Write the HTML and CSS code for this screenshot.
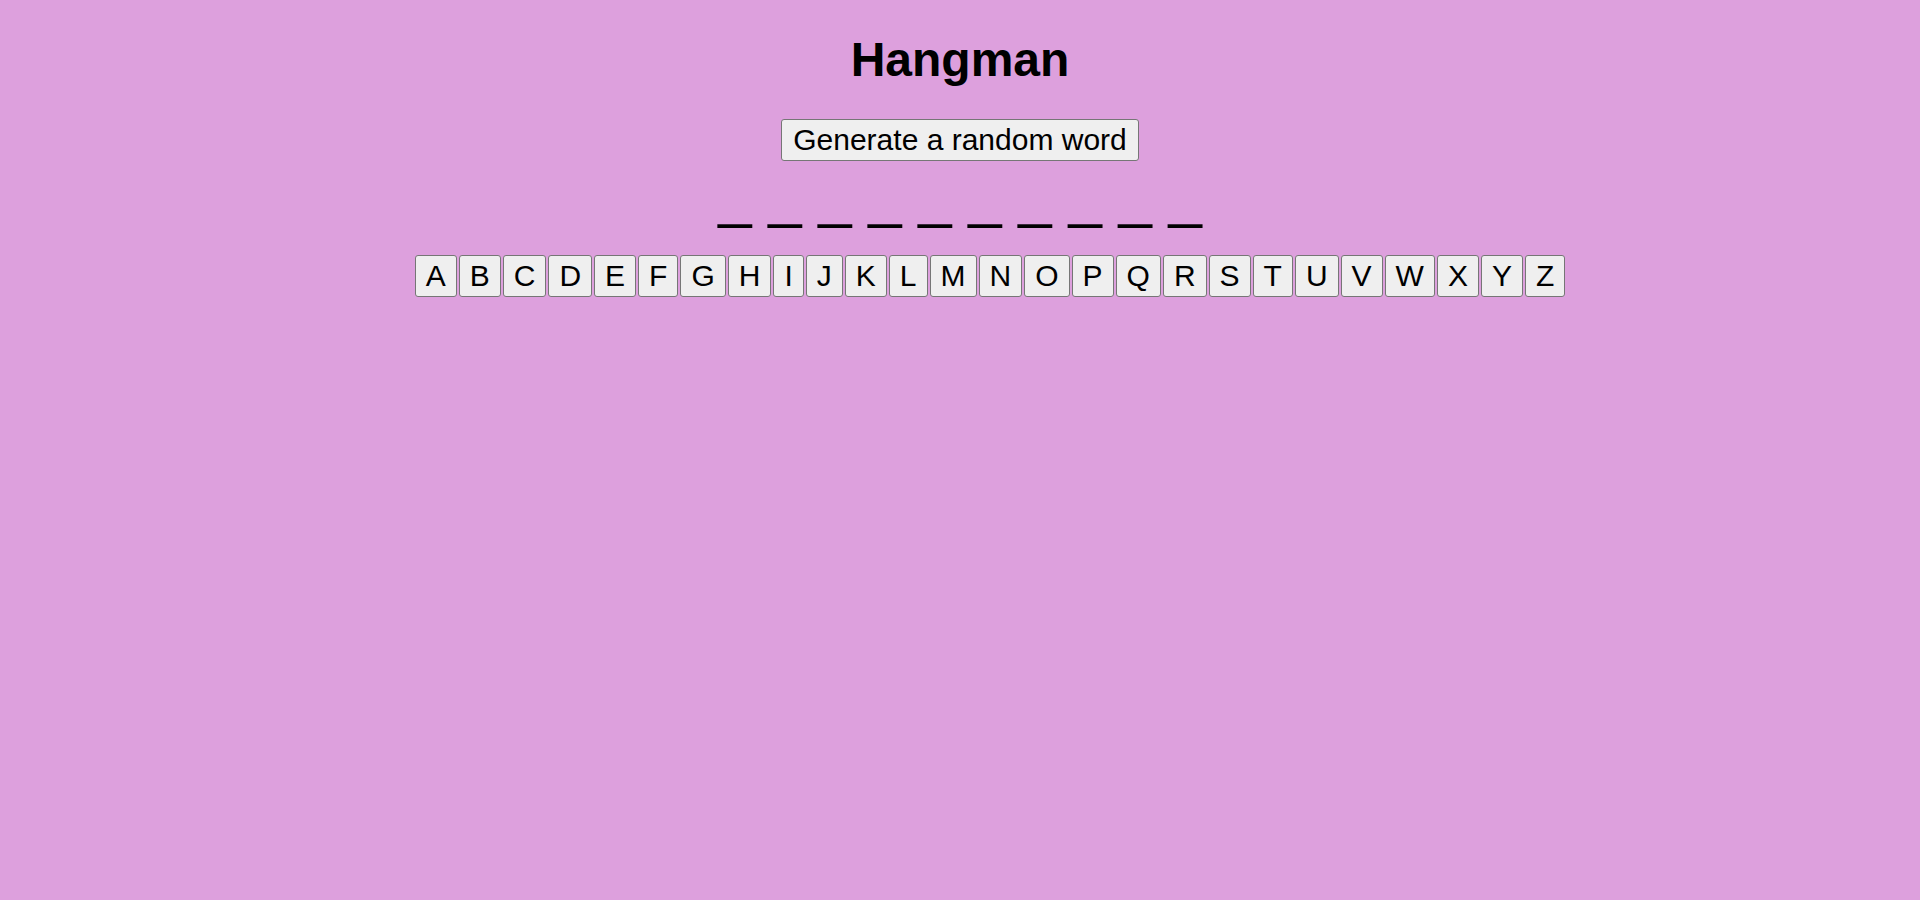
FILE: index.html
```html
<!DOCTYPE html>
<html lang="en">
<head>
<meta charset="utf-8">
<title>Hangman</title>
<link rel="stylesheet" href="styles.css">
</head>
<body>
<main class="game">
  <h1 class="title">Hangman</h1>
  <button class="btn generate">Generate a random word</button>
  <div class="word">_ _ _ _ _ _ _ _ _ _</div>
  <div class="keyboard">
    <button class="btn key">A</button><button class="btn key">B</button><button class="btn key">C</button><button class="btn key">D</button><button class="btn key">E</button><button class="btn key">F</button><button class="btn key">G</button><button class="btn key">H</button><button class="btn key">I</button><button class="btn key">J</button><button class="btn key">K</button><button class="btn key">L</button><button class="btn key">M</button><button class="btn key">N</button><button class="btn key">O</button><button class="btn key">P</button><button class="btn key">Q</button><button class="btn key">R</button><button class="btn key">S</button><button class="btn key">T</button><button class="btn key">U</button><button class="btn key">V</button><button class="btn key">W</button><button class="btn key">X</button><button class="btn key">Y</button><button class="btn key">Z</button>
  </div>
</main>
</body>
</html>
```
FILE: styles.css
```css
html, body {
  margin: 0;
  padding: 0;
  background: #dda0dd;
  height: 100%;
}

body {
  font-family: "Liberation Sans", Arial, sans-serif;
  color: #000;
}

.game {
  display: flex;
  flex-direction: column;
  align-items: center;
}

.title {
  margin: 32px 0 0;
  font-size: 48px;
  line-height: 56px;
  font-weight: bold;
}

.btn {
  font-family: "Liberation Sans", Arial, sans-serif;
  font-size: 30px;
  line-height: 34px;
  color: #000;
  background: #efefef;
  border: 1px solid #767676;
  border-radius: 3px;
  padding: 3px 10px;
  margin: 0;
  cursor: pointer;
}

.generate {
  margin-top: 31px;
  padding: 3px 11px;
}

.word {
  margin-top: 5px;
  font-size: 60px;
  line-height: 60px;
  white-space: pre;
}

.keyboard {
  margin-top: 29px;
  display: flex;
  justify-content: center;
  gap: 2px;
  padding-left: 60px;
}
```
